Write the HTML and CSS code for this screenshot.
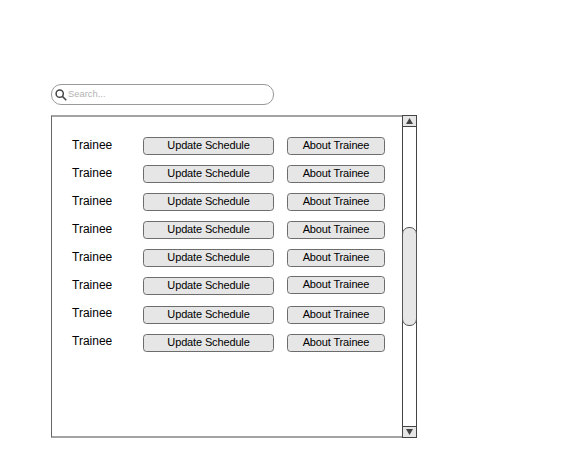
FILE: index.html
```html
<!DOCTYPE html>
<html lang="en">
<head>
<meta charset="utf-8">
<title>Trainees</title>
<link rel="stylesheet" href="styles.css">
</head>
<body>
<main class="page">
  <label class="search">
    <svg class="search-icon" viewBox="0 0 12 12"><circle cx="4.7" cy="4.7" r="3.6"/><path d="M7.4 7.4L11.3 11.3"/></svg>
    <span>Search...</span>
  </label>
  <section class="panel">
    <div class="columns">
      <div class="names">
        <span>Trainee</span><span>Trainee</span><span>Trainee</span><span>Trainee</span><span>Trainee</span><span>Trainee</span><span>Trainee</span><span>Trainee</span>
      </div>
      <div class="buttons schedule">
        <button>Update Schedule</button><button>Update Schedule</button><button>Update Schedule</button><button>Update Schedule</button><button>Update Schedule</button><button>Update Schedule</button><button class="loose">Update Schedule</button><button>Update Schedule</button>
      </div>
      <div class="buttons about">
        <button>About Trainee</button><button>About Trainee</button><button>About Trainee</button><button>About Trainee</button><button>About Trainee</button><button class="tight">About Trainee</button><button class="looser">About Trainee</button><button>About Trainee</button>
      </div>
    </div>
    <div class="scrollbar">
      <div class="arrow"><svg viewBox="0 0 7 6"><path d="M3.5 0L7 6H0Z"/></svg></div>
      <div class="track"><div class="thumb"></div></div>
      <div class="arrow"><svg viewBox="0 0 7 6"><path d="M0 0H7L3.5 6Z"/></svg></div>
    </div>
  </section>
</main>
</body>
</html>
```
FILE: styles.css
```css
* { box-sizing: border-box; }
body {
  margin: 0;
  background: #fff;
  color: #000;
  font-family: "Liberation Sans", Arial, sans-serif;
}
.page { padding: 84px 0 0 51px; height: 470px; }
.search {
  display: flex;
  align-items: center;
  width: 223px;
  height: 21px;
  padding-left: 3px;
  border: 1px solid #999;
  border-radius: 10px;
  color: #b3b3b3;
  font-size: 9.4px;
  line-height: 11px;
}
.search span { margin: -2px 0 0 1px; }
.search-icon {
  width: 12px;
  height: 12px;
  margin-top: 1px;
  fill: none;
  stroke: #444;
  stroke-width: 1.5;
}
.panel {
  display: flex;
  justify-content: space-between;
  width: 366px;
  height: 323px;
  margin-top: 10px;
  border: solid #666;
  border-width: 2px 1px;
  border-top-color: #a3a3a3;
  border-bottom-color: #a3a3a3;
}
.columns { display: flex; padding-left: 20px; }
.names {
  display: flex;
  flex-direction: column;
  width: 71px;
  padding-top: 21px;
  font-size: 12px;
  line-height: 14px;
  gap: 14px;
}
.buttons {
  display: flex;
  flex-direction: column;
  padding-top: 20px;
  gap: 10px;
}
.schedule { width: 131px; }
.about { width: 98px; margin-left: 13px; }
.buttons button {
  height: 18px;
  padding: 0 0 2px;
  border: 1px solid #6c6c6c;
  border-radius: 3.5px;
  background: #e6e6e6;
  color: #000;
  font: 11px/14px "Liberation Sans", Arial, sans-serif;
  letter-spacing: -0.14px;
}
.buttons .loose { margin-top: 1px; }
.buttons .tight { margin-top: -1px; }
.buttons .looser { margin-top: 2px; }
.scrollbar {
  display: flex;
  flex-direction: column;
  width: 15px;
  margin: -2px -1px -2px 0;
}
.arrow {
  display: flex;
  align-items: center;
  justify-content: center;
  height: 12px;
  border: 1px solid #444;
  background: #e6e6e6;
}
.arrow svg { width: 7px; height: 6px; fill: #444; }
.track {
  flex: 1;
  padding-top: 100px;
  border: solid #444;
  border-width: 0 1px;
}
.thumb {
  height: 99px;
  margin: 0 -1px;
  border: 1px solid #555;
  border-radius: 7px;
  background: #e6e6e6;
}
```
